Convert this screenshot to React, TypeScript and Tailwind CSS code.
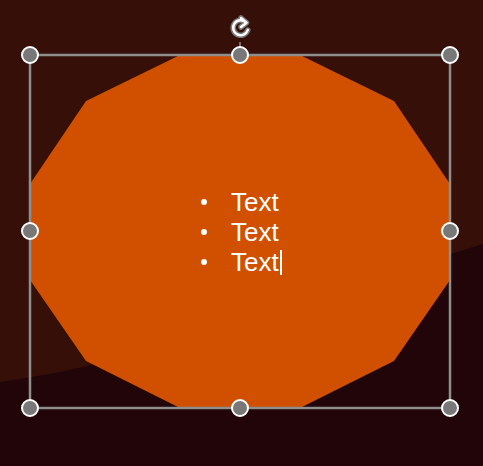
import React from 'react';

const lines = ['Text', 'Text', 'Text'];

// dodecagon points, traced from the slide
const shapePoints = '180,55 300,55 394,101 450,184 450,280 394,361 300,408 180,408 86,361 30,280 30,184 86,101';

const handles: [number, number][] = [
  [30, 55], [240, 55], [450, 55],
  [30, 231], [450, 231],
  [30, 408], [240, 408], [450, 408],
];

function Handle({ x, y }: { x: number; y: number }) {
  return <circle cx={x} cy={y} r={8} fill="#787878" stroke="#ffffff" strokeWidth={2} />;
}

const arc = 'M246,22.5 A7.5,7.5 0 1 0 247.8,30';
const head = 'M241,18 L246.5,22.8 L241,27';

export default function App() {
  return (
    <div className="relative w-[483px] h-[466px] overflow-hidden bg-[#350f08] font-['Liberation_Sans',Arial,sans-serif]">
      <svg className="absolute inset-0" width={483} height={466} viewBox="0 0 483 466">
        {/* darker lower backdrop */}
        <path d="M0,382 C150,362 300,300 483,244 L483,466 L0,466 Z" fill="#210508" />
        <polygon points={shapePoints} fill="#d05000" />
        {/* selection frame */}
        <rect x={30} y={55} width={420} height={353} fill="none" stroke="#8e8e8e" strokeWidth={2.5} />
        <line x1={240} y1={42} x2={240} y2={48} stroke="#8e8e8e" strokeWidth={1.5} />
        {handles.map(([x, y], i) => (
          <Handle key={i} x={x} y={y} />
        ))}
        {/* rotate icon */}
        <g fill="none" strokeLinecap="round" strokeLinejoin="round">
          <path d={arc} stroke="#7a7a7a" strokeWidth={5.5} />
          <path d={head} stroke="#7a7a7a" strokeWidth={5.5} />
          <path d={arc} stroke="#ffffff" strokeWidth={2.5} />
          <path d={head} stroke="#ffffff" strokeWidth={2.5} />
        </g>
      </svg>

      <div className="absolute left-[201px] top-[187px] flex flex-col text-white text-[26px] leading-[30px]">
        {lines.map((t, i) => (
          <div key={i} className="flex items-center">
            <span className="w-[6px] h-[6px] rounded-full bg-white" />
            <span className="ml-[24px] flex items-center">
              {t}
              {i === lines.length - 1 && <span className="ml-[1px] w-[2px] h-[25px] bg-white" />}
            </span>
          </div>
        ))}
      </div>
    </div>
  );
}
